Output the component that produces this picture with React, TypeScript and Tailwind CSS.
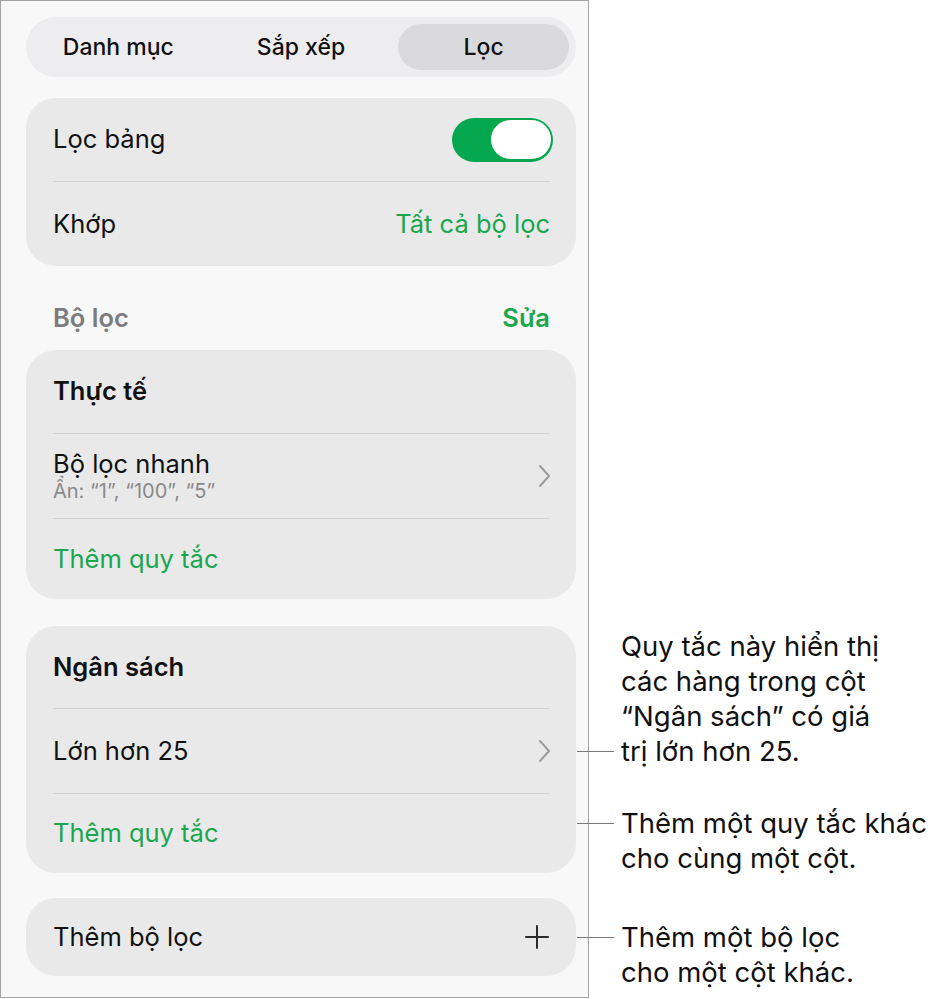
import React, { useState } from 'react';

const GREEN = 'text-[#1aa64d]';

const Chevron: React.FC = () => (
  <svg width="14" height="26" viewBox="0 0 14 26" fill="none" className="shrink-0">
    <path d="M3 3l9 10-9 10" stroke="#9b9b9d" strokeWidth="2" strokeLinecap="round" strokeLinejoin="round" />
  </svg>
);

const Plus: React.FC = () => (
  <svg width="26" height="26" viewBox="0 0 26 26" fill="none" className="shrink-0">
    <path d="M13 2v22M2 13h22" stroke="#2a2a2a" strokeWidth="2" strokeLinecap="round" />
  </svg>
);

const Divider: React.FC = () => <div className="h-px bg-[#d3d3d5] ml-[27px] mr-[26px]" />;

const Toggle: React.FC<{ on: boolean; onChange: () => void }> = ({ on, onChange }) => (
  <button
    onClick={onChange}
    className={`w-[101px] h-[44px] rounded-full p-[2.5px] flex ${on ? 'bg-[#05a74e] justify-end' : 'bg-[#d6d6d8] justify-start'}`}
  >
    <span className="block w-[60px] h-[39px] rounded-full bg-white" />
  </button>
);

const Callout: React.FC<{ lines: string[]; anchor: 'first' | 'last'; className?: string }> = ({ lines, anchor, className }) => (
  <div className={`flex ${anchor === 'last' ? 'items-end' : 'items-start'} ${className ?? ''}`}>
    <div className="h-[35px] flex items-center">
      <div className="w-[37px] h-px bg-[#7a7a7a]" />
    </div>
    <p className="ml-[7px] text-[27.5px] leading-[35px] text-[#111] whitespace-nowrap">
      {lines.map((l, i) => (
        <span key={i} className="block">{l}</span>
      ))}
    </p>
  </div>
);

const App: React.FC = () => {
  const [tab, setTab] = useState(2);
  const [filterOn, setFilterOn] = useState(true);
  const tabs = ['Danh mục', 'Sắp xếp', 'Lọc'];

  return (
    <div className="w-[948px] h-[999px] bg-white flex font-['Inter','Noto_Sans',sans-serif] text-[#111]">
      {/* filter panel */}
      <div className="w-[589px] h-[998px] shrink-0 border border-[#a3a3a3] bg-[#f8f8f8] pl-[25px] pr-[12px] pt-[16px]">
        <div className="h-[60px] rounded-full bg-[#ededef] p-[7px] grid grid-cols-3 gap-[12px]">
          {tabs.map((t, i) => (
            <button
              key={t}
              onClick={() => setTab(i)}
              className={`rounded-full text-[23px] font-medium ${tab === i ? 'bg-[#dadadc]' : ''}`}
            >
              {t}
            </button>
          ))}
        </div>

        <div className="mt-[21px] rounded-[30px] bg-[#e9e9ea]">
          <div className="h-[83px] flex items-center justify-between pl-[27px] pr-[23px]">
            <span className="text-[25.5px]">Lọc bảng</span>
            <Toggle on={filterOn} onChange={() => setFilterOn(!filterOn)} />
          </div>
          <Divider />
          <div className="h-[84px] flex items-center justify-between pl-[27px] pr-[26px]">
            <span className="text-[25.5px]">Khớp</span>
            <span className={`text-[25.5px] ${GREEN}`}>Tất cả bộ lọc</span>
          </div>
        </div>

        <div className="h-[84px] flex items-center justify-between pl-[27px] pr-[26px] pt-[20px]">
          <span className="text-[25.5px] font-semibold text-[#7c7c7e]">Bộ lọc</span>
          <span className={`text-[25.5px] font-semibold ${GREEN}`}>Sửa</span>
        </div>

        <div className="rounded-[30px] bg-[#e9e9ea]">
          <div className="h-[83px] flex items-center pl-[27px]">
            <span className="text-[25.5px] font-semibold">Thực tế</span>
          </div>
          <Divider />
          <div className="h-[84px] flex items-center justify-between pl-[27px] pr-[25px]">
            <div className="flex flex-col">
              <span className="text-[25.5px] leading-[30px]">Bộ lọc nhanh</span>
              <span className="text-[20px] leading-[25px] text-[#8a8a8c]">Ẩn: “1”, “100”, “5”</span>
            </div>
            <Chevron />
          </div>
          <Divider />
          <div className="h-[80px] flex items-center pl-[27px]">
            <span className={`text-[25.5px] ${GREEN}`}>Thêm quy tắc</span>
          </div>
        </div>

        <div className="mt-[27px] rounded-[30px] bg-[#e9e9ea]">
          <div className="h-[82px] flex items-center pl-[27px]">
            <span className="text-[25.5px] font-semibold">Ngân sách</span>
          </div>
          <Divider />
          <div className="h-[84px] flex items-center justify-between pl-[27px] pr-[25px]">
            <span className="text-[25.5px]">Lớn hơn 25</span>
            <Chevron />
          </div>
          <Divider />
          <div className="h-[79px] flex items-center pl-[27px]">
            <span className={`text-[25.5px] ${GREEN}`}>Thêm quy tắc</span>
          </div>
        </div>

        <div className="mt-[25px] h-[78px] rounded-[30px] bg-[#e9e9ea] flex items-center justify-between pl-[27px] pr-[26px]">
          <span className="text-[25.5px]">Thêm bộ lọc</span>
          <Plus />
        </div>
      </div>

      {/* callouts */}
      <div className="-ml-[12px] pt-[629px] flex flex-col">
        <Callout
          anchor="last"
          lines={['Quy tắc này hiển thị', 'các hàng trong cột', '“Ngân sách” có giá', 'trị lớn hơn 25.']}
        />
        <Callout anchor="first" className="mt-[37px]" lines={['Thêm một quy tắc khác', 'cho cùng một cột.']} />
        <Callout anchor="first" className="mt-[44px]" lines={['Thêm một bộ lọc', 'cho một cột khác.']} />
      </div>
    </div>
  );
};

export default App;
